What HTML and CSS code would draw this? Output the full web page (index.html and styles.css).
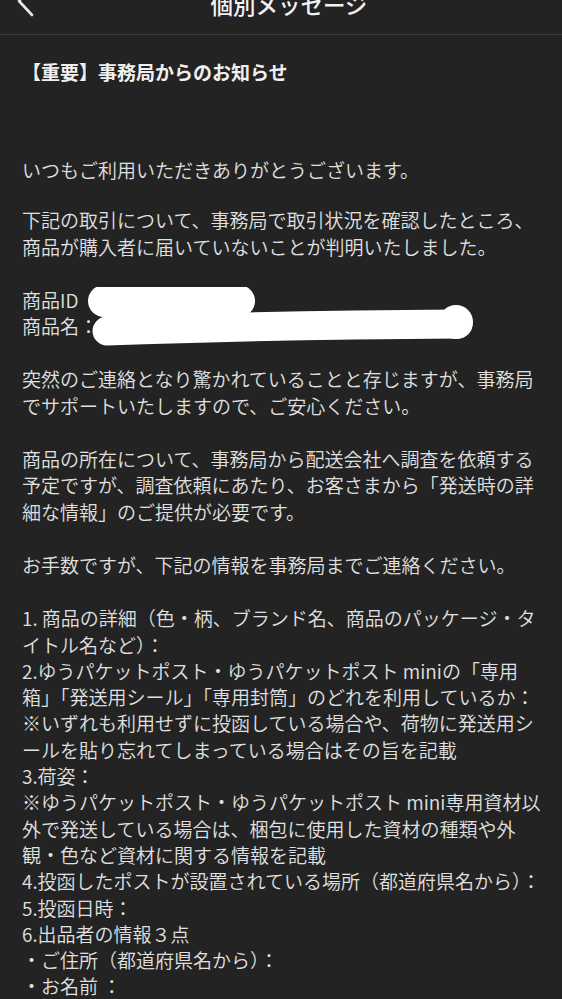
FILE: index.html
```html
<!DOCTYPE html>
<html lang="ja">
<head>
<meta charset="utf-8">
<title>個別メッセージ</title>
<link rel="stylesheet" href="styles.css">
</head>
<body>
<header class="nav">
  <div class="nav-left">
    <svg class="back" width="18" height="32" viewBox="0 0 18 32" aria-hidden="true">
      <path d="M16 2 L3 16 L16 30" fill="none" stroke="#e6e6e6" stroke-width="2.6" stroke-linecap="round" stroke-linejoin="round"/>
    </svg>
  </div>
  <h1 class="nav-title">個別メッセージ</h1>
  <div class="nav-right"></div>
</header>
<main class="message">
  <h2 class="subject">【重要】事務局からのお知らせ</h2>
  <p class="para first">いつもご利用いただきありがとうございます。</p>
  <p class="para">下記の取引について、事務局で取引状況を確認したところ、<br>商品が購入者に届いていないことが判明いたしました。</p>
  <div class="para item-info">
    <p class="line">商品ID</p>
    <p class="line">商品名：</p>
    <svg class="redact" width="480" height="62" viewBox="0 0 480 62" aria-hidden="true">
      <path d="M82 14 L217 14" stroke="#ffffff" stroke-width="32" stroke-linecap="round" fill="none"/>
      <path d="M85 44 Q 250 38 436 37" stroke="#ffffff" stroke-width="29" stroke-linecap="round" fill="none"/>
      <circle cx="434" cy="35" r="17" fill="#ffffff"/>
    </svg>
  </div>
  <p class="para">突然のご連絡となり驚かれていることと存じますが、事務局<br>でサポートいたしますので、ご安心ください。</p>
  <p class="para">商品の所在について、事務局から配送会社へ調査を依頼する<br>予定ですが、調査依頼にあたり、お客さまから「発送時の詳<br>細な情報」のご提供が必要です。</p>
  <p class="para">お手数ですが、下記の情報を事務局までご連絡ください。</p>
  <p class="para">1. 商品の詳細（色・柄、ブランド名、商品のパッケージ・タ<br>イトル名など）：<br>2.ゆうパケットポスト・ゆうパケットポスト miniの「専用<br>箱」「発送用シール」「専用封筒」のどれを利用しているか：<br>※いずれも利用せずに投函している場合や、荷物に発送用シ<br>ールを貼り忘れてしまっている場合はその旨を記載<br>3.荷姿：<br>※ゆうパケットポスト・ゆうパケットポスト mini専用資材以<br>外で発送している場合は、梱包に使用した資材の種類や外<br>観・色など資材に関する情報を記載<br>4.投函したポストが設置されている場所（都道府県名から）：<br>5.投函日時：<br>6.出品者の情報３点<br>・ご住所（都道府県名から）：<br>・お名前 ：</p>
</main>
</body>
</html>
```

FILE: styles.css
```css
html, body {
  margin: 0;
  padding: 0;
  background: #232323;
}
body {
  width: 562px;
  height: 999px;
  overflow: hidden;
  font-family: "Noto Sans CJK JP", "Noto Sans", sans-serif;
  color: #e0e0e0;
}
.nav {
  height: 35px;
  box-sizing: border-box;
  border-bottom: 1px solid #3b3b3b;
  display: grid;
  grid-template-columns: 1fr auto 1fr;
  align-items: end;
  align-content: end;
  padding: 0 0 15px 16px;
  overflow: hidden;
}
.nav-left {
  display: flex;
  align-items: flex-end;
}
.back {
  display: block;
  margin-bottom: 2px;
}
.nav-title {
  margin: 0;
  font-size: 22.5px;
  line-height: 30px;
  font-weight: 500;
  color: #f2f2f2;
  white-space: nowrap;
}
.message {
  padding: 23px 22px 0 22px;
}
.subject {
  margin: 0 0 71px 0;
  font-size: 19px;
  line-height: 28px;
  font-weight: 700;
  color: #f0f0f0;
  white-space: nowrap;
}
.para {
  margin: 0 0 27px 0;
  font-size: 19px;
  line-height: 26.3px;
  font-weight: 350;
  white-space: nowrap;
}
.para.first {
  margin-bottom: 24px;
}
.item-info {
  position: relative;
}
.line {
  margin: 0;
}
.redact {
  position: absolute;
  left: 0;
  top: 0;
}
```
